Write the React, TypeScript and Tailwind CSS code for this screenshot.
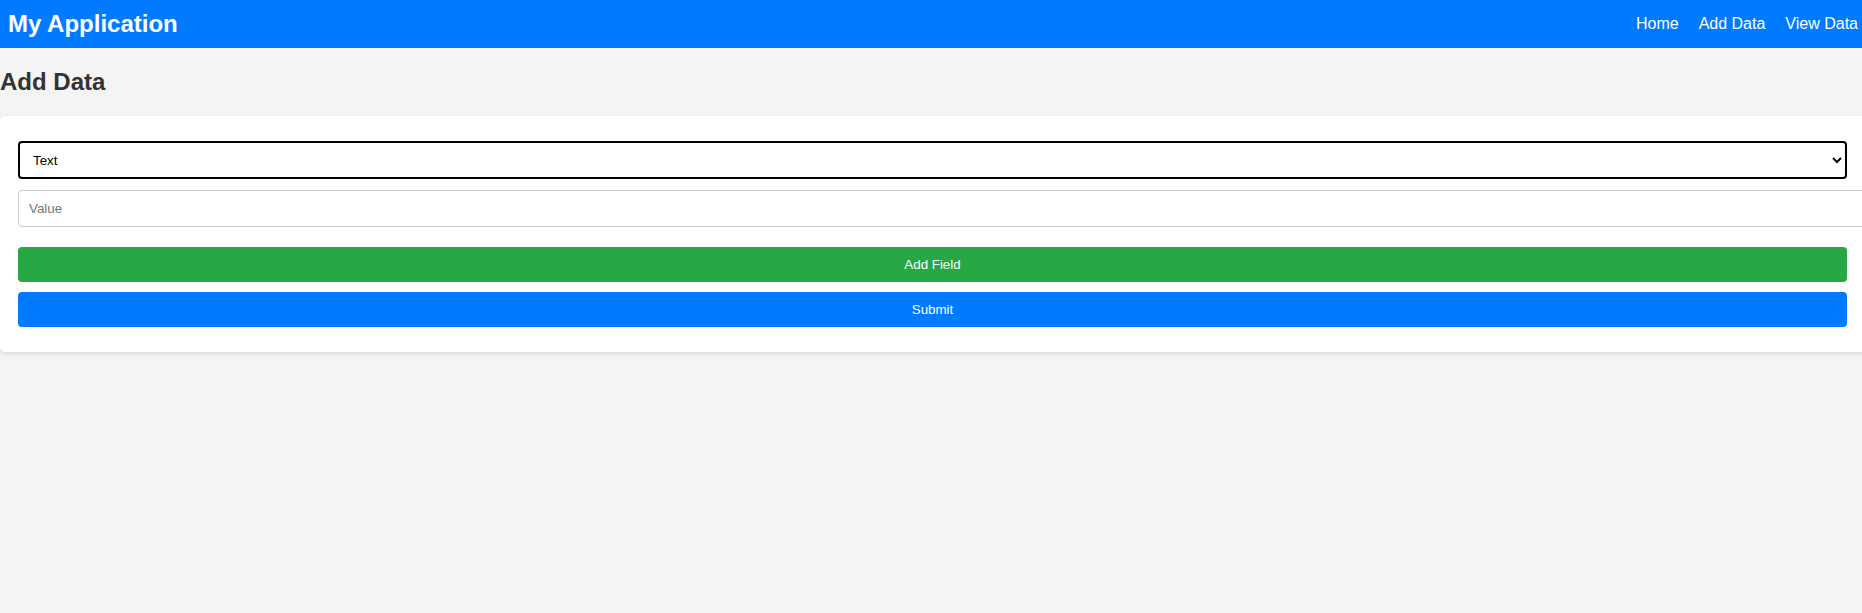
import { useState } from "react";

const navLinks = ["Home", "Add Data", "View Data"];

function Header() {
  return (
    <header className="flex h-[48px] items-center justify-between bg-[#007bff] pl-[8px] pr-[4px] text-white">
      <h1 className="text-[24px] font-bold leading-[28px]">My Application</h1>
      <nav className="flex items-center gap-[20px] text-[16px]">
        {navLinks.map((link) => (
          <a key={link} href="#" className="text-white">
            {link}
          </a>
        ))}
      </nav>
    </header>
  );
}

export default function App() {
  const [fieldType, setFieldType] = useState("text");
  const [value, setValue] = useState("");

  return (
    <div className="min-h-[613px] overflow-x-hidden bg-[#f4f4f4] font-['Liberation_Sans',Arial,sans-serif] text-[#333]">
      <Header />
      <main>
        <h2 className="my-[20px] text-[24px] font-bold leading-[28px]">Add Data</h2>
        {/* card is wider than the viewport, like the original */}
        <form
          className="flex w-[calc(100%+20px)] flex-col rounded-[5px] bg-white pb-[25px] pl-[18px] pr-[35px] pt-[25px] shadow-[0_2px_4px_rgba(0,0,0,0.1)]"
          onSubmit={(e) => e.preventDefault()}
        >
          <select
            value={fieldType}
            onChange={(e) => setFieldType(e.target.value)}
            className="h-[38px] w-full rounded-[4px] border-2 border-black bg-white px-[9px] text-[13.33px] text-black"
          >
            <option value="text">Text</option>
            <option value="number">Number</option>
            <option value="date">Date</option>
          </select>
          <input
            type="text"
            value={value}
            onChange={(e) => setValue(e.target.value)}
            placeholder="Value"
            className="mt-[11px] h-[37px] w-[calc(100%+22px)] rounded-[4px] border border-[#ccc] px-[10px] text-[13.33px] placeholder:text-[#757575]"
          />
          <button
            type="button"
            className="mt-[20px] h-[35px] w-full rounded-[4px] bg-[#28a745] text-[13.33px] text-white"
          >
            Add Field
          </button>
          <button
            type="submit"
            className="mt-[10px] h-[35px] w-full rounded-[4px] bg-[#007bff] text-[13.33px] text-white"
          >
            Submit
          </button>
        </form>
      </main>
    </div>
  );
}
